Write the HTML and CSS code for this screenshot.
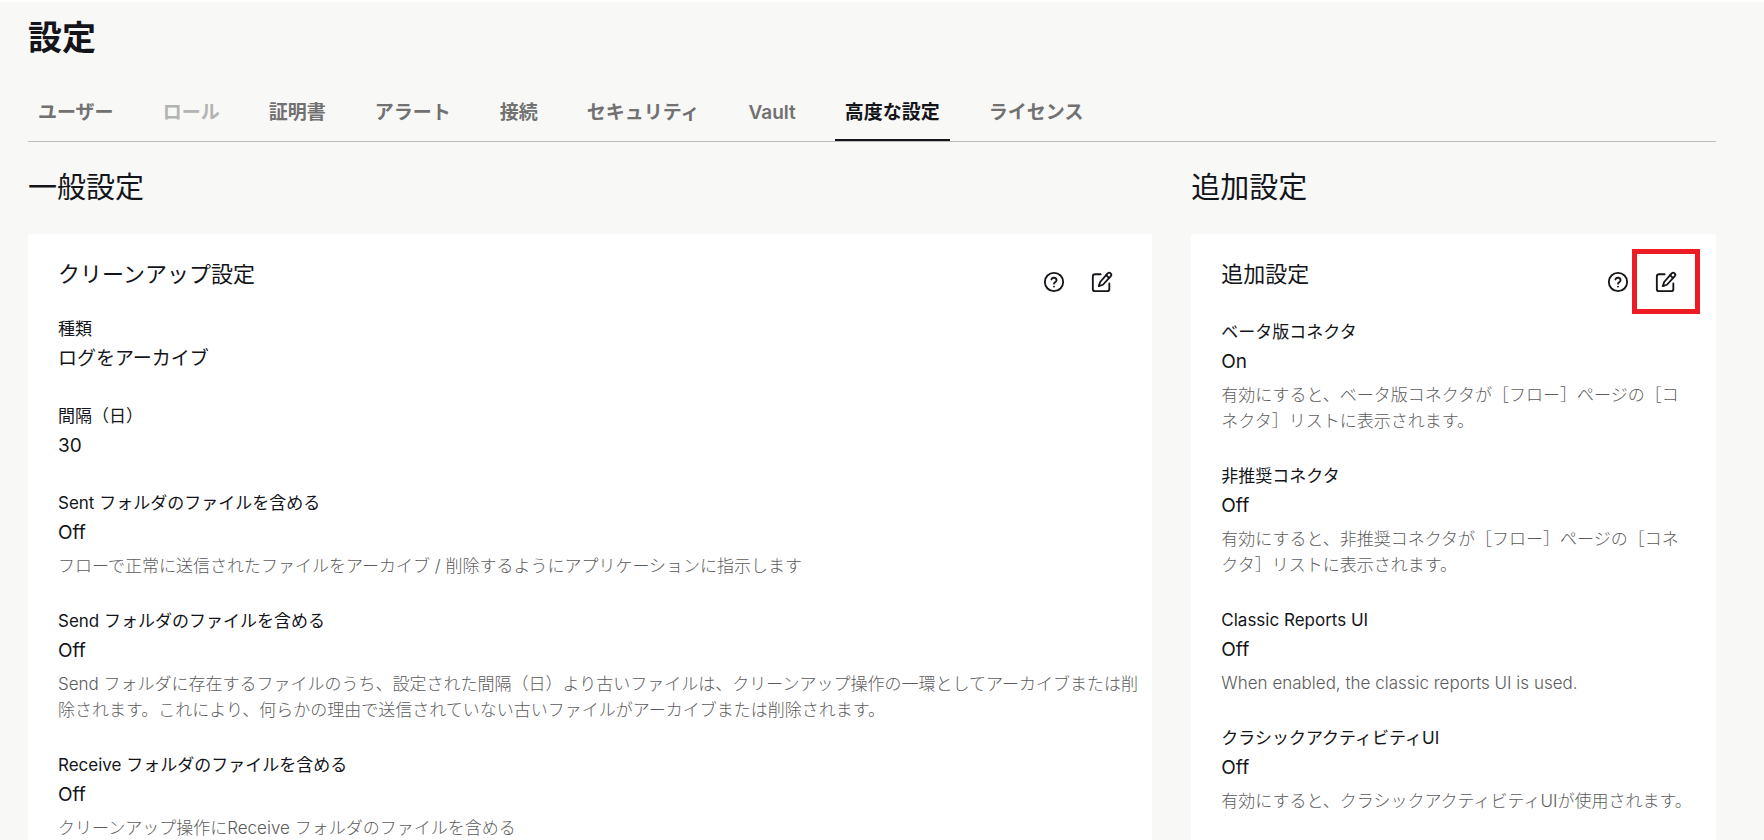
FILE: index.html
```html
<!DOCTYPE html>
<html lang="ja">
<head>
    <meta charset="UTF-8">
    <meta name="viewport" content="width=device-width, initial-scale=1.0">
    <title>設定</title>
    <link rel="stylesheet" href="styles.css">
</head>
<body>
    <!-- Shared icon shapes -->
    <svg class="icon-defs" aria-hidden="true">
        <symbol id="icon-help" viewBox="0 0 24 24">
            <circle cx="12" cy="12" r="10"></circle>
            <path d="M9.2 9.2a2.9 2.9 0 0 1 5.6.9c0 1.9-2.8 2.2-2.8 3.7"></path>
            <path d="M12 17h.01"></path>
        </symbol>
        <symbol id="icon-edit" viewBox="0 0 24 24">
            <path d="M10.5 3.5H4.5A2.5 2.5 0 0 0 2 6v13.5A2.5 2.5 0 0 0 4.5 22h13a2.5 2.5 0 0 0 2.5-2.5v-6"></path>
            <path d="M18.2 2.6a2.2 2.2 0 0 1 3.2 3.2L13 15l-4.5 1.5L10 12z"></path>
            <path d="M16.5 4.5l3 3"></path>
        </symbol>
    </svg>

    <header class="page-header">
        <h1>設定</h1>
        <nav class="tabs">
            <a href="#" class="tab">ユーザー</a>
            <a href="#" class="tab disabled">ロール</a>
            <a href="#" class="tab">証明書</a>
            <a href="#" class="tab">アラート</a>
            <a href="#" class="tab">接続</a>
            <a href="#" class="tab">セキュリティ</a>
            <a href="#" class="tab">Vault</a>
            <a href="#" class="tab active">高度な設定</a>
            <a href="#" class="tab">ライセンス</a>
        </nav>
    </header>

    <main class="columns">
        <!-- General settings -->
        <section>
            <h2>一般設定</h2>
            <div class="card">
                <div class="card-header">
                    <h3>クリーンアップ設定</h3>
                    <div class="actions">
                        <button type="button" class="icon-button" aria-label="ヘルプ"><svg class="icon"><use href="#icon-help"></use></svg></button>
                        <button type="button" class="icon-button" aria-label="編集"><svg class="icon"><use href="#icon-edit"></use></svg></button>
                    </div>
                </div>
                <dl class="settings">
                    <div>
                        <dt>種類</dt>
                        <dd class="value">ログをアーカイブ</dd>
                    </div>
                    <div>
                        <dt>間隔（日）</dt>
                        <dd class="value">30</dd>
                    </div>
                    <div>
                        <dt>Sent フォルダのファイルを含める</dt>
                        <dd class="value">Off</dd>
                        <dd class="hint">フローで正常に送信されたファイルをアーカイブ / 削除するようにアプリケーションに指示します</dd>
                    </div>
                    <div>
                        <dt>Send フォルダのファイルを含める</dt>
                        <dd class="value">Off</dd>
                        <dd class="hint">Send フォルダに存在するファイルのうち、設定された間隔（日）より古いファイルは、クリーンアップ操作の一環としてアーカイブまたは削除されます。これにより、何らかの理由で送信されていない古いファイルがアーカイブまたは削除されます。</dd>
                    </div>
                    <div>
                        <dt>Receive フォルダのファイルを含める</dt>
                        <dd class="value">Off</dd>
                        <dd class="hint">クリーンアップ操作にReceive フォルダのファイルを含める</dd>
                    </div>
                </dl>
            </div>
        </section>

        <!-- Additional settings -->
        <section>
            <h2>追加設定</h2>
            <div class="card side">
                <div class="card-header">
                    <h3>追加設定</h3>
                    <div class="actions">
                        <button type="button" class="icon-button" aria-label="ヘルプ"><svg class="icon"><use href="#icon-help"></use></svg></button>
                        <button type="button" class="icon-button marked" aria-label="編集"><svg class="icon"><use href="#icon-edit"></use></svg></button>
                    </div>
                </div>
                <dl class="settings">
                    <div>
                        <dt>ベータ版コネクタ</dt>
                        <dd class="value">On</dd>
                        <dd class="hint">有効にすると、ベータ版コネクタが［フロー］ページの［コネクタ］リストに表示されます。</dd>
                    </div>
                    <div>
                        <dt>非推奨コネクタ</dt>
                        <dd class="value">Off</dd>
                        <dd class="hint">有効にすると、非推奨コネクタが［フロー］ページの［コネクタ］リストに表示されます。</dd>
                    </div>
                    <div>
                        <dt>Classic Reports UI</dt>
                        <dd class="value">Off</dd>
                        <dd class="hint">When enabled, the classic reports UI is used.</dd>
                    </div>
                    <div>
                        <dt>クラシックアクティビティUI</dt>
                        <dd class="value">Off</dd>
                        <dd class="hint single-line">有効にすると、クラシックアクティビティUIが使用されます。</dd>
                    </div>
                </dl>
            </div>
        </section>
    </main>
</body>
</html>
```
FILE: styles.css
```css
/* Reset */
* {
    margin: 0;
    padding: 0;
    box-sizing: border-box;
}

body {
    height: 100vh;
    overflow: hidden;
    padding: 0 48px 0 28px;
    border-top: 2px solid #fefefe;
    font-family: Inter, "Noto Sans CJK JP", sans-serif;
    font-size: 17px;
    line-height: 26px;
    background-color: #f8f8f7;
    color: #14151a;
}

.icon-defs {
    display: none;
}

/* Header and tabs */
h1 {
    padding-top: 14px;
    font-size: 34px;
    line-height: 44px;
    font-weight: 700;
}

.tabs {
    display: flex;
    gap: 29px;
    margin-top: 22px;
    border-bottom: 1px solid #bdbdbd;
}

.tab {
    padding: 18px 10px 13px;
    border-bottom: 2px solid transparent;
    font-size: 19px;
    line-height: 26px;
    font-weight: 600;
    color: #717171;
    text-decoration: none;
}

.tab.disabled {
    color: #b3b3b3;
}

.tab.active {
    border-bottom-color: #14151a;
    font-weight: 700;
    color: #14151a;
}

/* Cards */
.columns {
    display: grid;
    grid-template-columns: 15fr 7fr;
    gap: 39px;
}

section {
    min-width: 0;
}

h2 {
    padding: 26px 0;
    font-size: 29px;
    line-height: 40px;
    font-weight: 400;
}

.card {
    padding: 15px 10px 30px 30px;
    border-radius: 3px;
    background-color: #fff;
}

.card-header {
    display: flex;
    justify-content: space-between;
    padding-right: 6px;
}

h3 {
    padding-top: 9px;
    font-size: 22px;
    line-height: 32px;
    font-weight: 400;
}

.actions {
    display: flex;
    align-items: center;
}

.icon-button {
    display: flex;
    align-items: center;
    justify-content: center;
    width: 28px;
    height: 65px;
    border: none;
    background: none;
    color: #14151a;
    cursor: pointer;
}

.icon-button:last-child {
    width: 68px;
}

.icon-button.marked {
    border: 5px solid #ed1c24;
}

.icon {
    width: 22px;
    height: 22px;
    fill: none;
    stroke: currentColor;
    stroke-width: 2;
    stroke-linecap: round;
    stroke-linejoin: round;
}

/* Setting rows */
.settings {
    display: flex;
    flex-direction: column;
    gap: 29px;
    padding-top: 2px;
}

.side .settings {
    padding: 5px 20px 0 0;
}

.value {
    margin-top: 2px;
    font-size: 19px;
    line-height: 30px;
}

.hint {
    margin-top: 5px;
    font-weight: 300;
    color: #5c5c5c;
}

.single-line {
    white-space: nowrap;
}
```
